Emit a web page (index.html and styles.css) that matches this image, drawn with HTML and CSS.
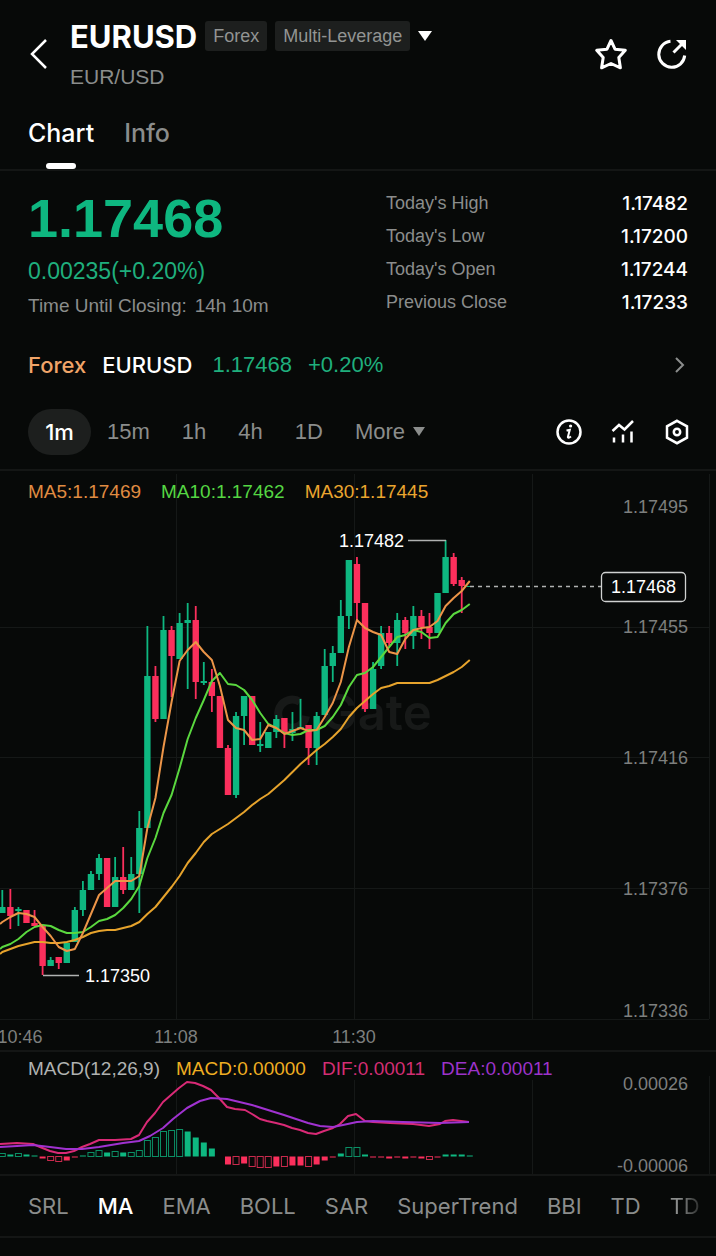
FILE: index.html
```html
<!DOCTYPE html>
<html lang="en">
<head>
  <meta charset="utf-8">
  <meta name="viewport" content="width=device-width, initial-scale=1">
  <title>EURUSD Chart</title>
  <link rel="stylesheet" href="styles.css">
</head>
<body>

<header class="top-bar">
  <button class="icon-btn back-btn" aria-label="Back">
    <svg width="20" height="32" viewBox="0 0 20 32"><path d="M18 2 L4 16 L18 30"/></svg>
  </button>
  <div class="pair">
    <div class="pair-row">
      <h1>EURUSD</h1>
      <span class="tag">Forex</span>
      <span class="tag">Multi-Leverage</span>
      <button class="icon-btn" aria-label="Switch pair">
        <svg class="solid" width="14" height="12" viewBox="0 0 14 12"><path d="M0 1 H14 L7 11 Z"/></svg>
      </button>
    </div>
    <div class="pair-name">EUR/USD</div>
  </div>
  <div class="top-actions">
    <button class="icon-btn" aria-label="Favorite">
      <svg class="bold" width="34" height="34" viewBox="0 0 34 34"><path d="M17 3.500 L21 12.200 L31.300 13.300 L24.800 20.500 L26.400 30.800 L17 26.500 L7.600 30.800 L9.200 20.500 L2.700 13.300 L13 12.200 Z"/></svg>
    </button>
    <button class="icon-btn" aria-label="Share">
      <svg class="bold" width="32" height="32" viewBox="0 0 32 32"><path d="M14.500 3.300 A13 13 0 1 0 28.700 17.500 M17.500 14.500 L26 6"/><path class="dot" d="M20 2 H30 V12 Z"/></svg>
    </button>
  </div>
</header>

<nav class="tabs">
  <a href="#chart" class="tab active">Chart</a>
  <a href="#info" class="tab">Info</a>
</nav>

<section class="quote">
  <div class="quote-main">
    <div class="price">1.17468</div>
    <div class="change">0.00235(+0.20%)</div>
    <div class="closing"><span>Time Until Closing:</span> <span>14h 10m</span></div>
  </div>
  <dl class="stats">
    <div><dt>Today's High</dt><dd>1.17482</dd></div>
    <div><dt>Today's Low</dt><dd>1.17200</dd></div>
    <div><dt>Today's Open</dt><dd>1.17244</dd></div>
    <div><dt>Previous Close</dt><dd>1.17233</dd></div>
  </dl>
</section>

<a href="#forex" class="ticker">
  <span class="ticker-type">Forex</span>
  <span class="ticker-name">EURUSD</span>
  <span class="ticker-price">1.17468</span>
  <span class="ticker-price">+0.20%</span>
  <svg class="ticker-arrow" width="14" height="18" viewBox="0 0 14 18"><path d="M2 2 L9 9 L2 16"/></svg>
</a>

<div class="toolbar">
  <div class="periods">
    <button class="period active">1m</button>
    <button class="period">15m</button>
    <button class="period">1h</button>
    <button class="period">4h</button>
    <button class="period">1D</button>
    <button class="period">More <svg class="solid" width="12" height="10" viewBox="0 0 12 10"><path d="M0 0 H12 L6 9 Z"/></svg></button>
  </div>
  <div class="tools">
    <button class="icon-btn" aria-label="Information">
      <svg width="28" height="28" viewBox="0 0 28 28"><circle cx="14" cy="14" r="11.500"/><path class="thin" d="M11.500 12.500 L14.800 11.800 L12.900 19 Q12.800 20.800 16 18.500"/><circle class="dot" cx="15.600" cy="8" r="1.600"/></svg>
    </button>
    <button class="icon-btn" aria-label="Indicators">
      <svg width="28" height="28" viewBox="0 0 28 28"><path d="M3.500 13 L10 7 L15.500 11.500 L24 3 M5 19.500 V24.500 M14 16.500 V24.500 M22.500 13.500 V24.500"/></svg>
    </button>
    <button class="icon-btn" aria-label="Settings">
      <svg width="28" height="28" viewBox="0 0 28 28"><path d="M14 2.800 L24 8.300 V19.700 L14 25.200 L4 19.700 V8.300 Z"/><circle cx="14" cy="14" r="3.200"/></svg>
    </button>
  </div>
</div>

<main id="chart">
  <section class="pane">
    <div class="legend">
      <span class="ma5">MA5:1.17469</span>
      <span class="ma10">MA10:1.17462</span>
      <span class="ma30">MA30:1.17445</span>
    </div>
    <svg class="plot" viewBox="0 471 716 579">
      <path class="grid" d="M0 627.500 H709 M0 757.500 H709 M0 888.500 H709 M0 1019.500 H709 M176.500 474 V1019 M354.500 474 V1019 M532.500 474 V1019 M709.500 474 V1019"/>
      <g class="watermark">
        <path d="M300 702 A14 14 0 1 0 306 716"/>
        <text x="321" y="730">Gate</text>
      </g>
      <g id="candles"></g>
      <polyline id="ma30" class="line line-ma30"/>
      <polyline id="ma10" class="line line-ma10"/>
      <polyline id="ma5" class="line line-ma5"/>
      <path class="marker" d="M408 540.500 H446 M43 975.500 H79"/>
      <path class="last-line" d="M470 586.500 H601"/>
      <rect class="last-box" x="601.500" y="572.500" width="84" height="29" rx="4"/>
      <g class="note">
        <text x="339" y="547">1.17482</text>
        <text x="85" y="982">1.17350</text>
        <text x="611" y="593">1.17468</text>
      </g>
      <g class="axis">
        <text x="688" y="513">1.17495</text>
        <text x="688" y="633">1.17455</text>
        <text x="688" y="764">1.17416</text>
        <text x="688" y="895">1.17376</text>
        <text x="688" y="1017">1.17336</text>
      </g>
      <g class="axis time">
        <text x="20" y="1043">10:46</text>
        <text x="176" y="1043">11:08</text>
        <text x="354" y="1043">11:30</text>
      </g>
    </svg>
  </section>

  <section class="pane macd-pane">
    <div class="legend">
      <span class="macd-name">MACD(12,26,9)</span>
      <span class="macd">MACD:0.00000</span>
      <span class="dif">DIF:0.00011</span>
      <span class="dea">DEA:0.00011</span>
    </div>
    <svg class="plot" viewBox="0 1052 716 122">
      <path class="grid" d="M176.500 1080 V1174 M354.500 1080 V1174 M532.500 1080 V1174 M709.500 1076 V1174"/>
      <g id="bars"></g>
      <polyline id="dif" class="line line-dif"/>
      <polyline id="dea" class="line line-dea"/>
      <g class="axis">
        <text x="688" y="1090">0.00026</text>
        <text x="688" y="1172">-0.00006</text>
      </g>
    </svg>
  </section>
</main>

<nav class="indicators">
  <button>SRL</button>
  <button class="active">MA</button>
  <button>EMA</button>
  <button>BOLL</button>
  <button>SAR</button>
  <button>SuperTrend</button>
  <button>BBI</button>
  <button>TD</button>
  <button class="fade">TD</button>
</nav>

<script src="chart.js"></script>
</body>
</html>
```
FILE: styles.css
```css
* {
  box-sizing: border-box;
}
body {
  margin: 0;
  background: #070908;
  color: #fff;
  font-family: "Liberation Sans", Arial, sans-serif;
  overflow-x: hidden;
}
h1, .tabs, .stats dd, .ticker-type, .ticker-name, .period.active, .indicators {
  font-family: Inter, "Liberation Sans", sans-serif;
}
button {
  border: 0;
  padding: 0;
  background: none;
  color: inherit;
  font: inherit;
}
a {
  color: inherit;
  text-decoration: none;
}
svg {
  display: block;
  fill: none;
  stroke: #fff;
  stroke-width: 2.5;
}
.bold {
  stroke-width: 3;
  stroke-linejoin: round;
}
.thin {
  stroke-width: 2;
}
.solid {
  fill: currentColor;
  stroke: none;
}
.dot {
  fill: #fff;
  stroke: none;
}

/* header */
.top-bar {
  display: flex;
  align-items: center;
  padding: 12px 28px 0;
  height: 96px;
}
.back-btn {
  width: 42px;
}
.pair {
  flex: 1;
}
.pair-row {
  display: flex;
  align-items: center;
  gap: 8px;
  height: 46px;
}
h1 {
  margin: 0;
  font-size: 31px;
  font-weight: 700;
}
.tag {
  padding: 0 8px;
  border-radius: 3px;
  background: #1d1f1e;
  color: #929493;
  font-size: 18px;
  line-height: 30px;
}
.pair-name {
  color: #8b8d8c;
  font-size: 21px;
  line-height: 36px;
}
.top-actions {
  display: flex;
  align-items: center;
  gap: 28px;
}

.tabs {
  display: flex;
  gap: 30px;
  height: 75px;
  padding: 0 28px;
  border-bottom: 2px solid #141615;
  color: #8b8d8c;
  font-size: 25px;
  font-weight: 500;
  line-height: 74px;
}
.tab.active {
  position: relative;
  color: #fff;
}
.tab.active::after {
  content: "";
  position: absolute;
  left: 18px;
  bottom: 0;
  width: 30px;
  height: 6px;
  border-radius: 3px;
  background: #fff;
}

/* quote */
.quote {
  display: flex;
  justify-content: space-between;
  padding: 16px 28px 0;
  height: 160px;
}
.price {
  color: #0eb780;
  font-size: 54px;
  font-weight: 700;
  line-height: 62px;
}
.change {
  color: #1faf7d;
  font-size: 23px;
  line-height: 44px;
}
.closing {
  display: flex;
  gap: 8px;
  color: #8b8d8c;
  font-size: 19px;
  line-height: 26px;
}
.stats {
  width: 302px;
  margin: 0;
  color: #8b8d8c;
  font-size: 18px;
  line-height: 33px;
}
.stats div {
  display: flex;
  justify-content: space-between;
}
.stats dd {
  margin: 0;
  color: #fff;
  font-size: 19px;
  font-weight: 500;
}

.ticker {
  display: flex;
  align-items: center;
  gap: 16px;
  height: 68px;
  padding: 0 28px;
  font-size: 22px;
}
.ticker-type {
  color: #f0a468;
  font-weight: 500;
}
.ticker-name {
  margin-right: 4px;
  font-weight: 500;
}
.ticker-price {
  color: #1faf7d;
}
.ticker-arrow {
  margin-left: auto;
  stroke: #8b8d8c;
  stroke-width: 2;
}

.toolbar {
  display: flex;
  align-items: center;
  justify-content: space-between;
  height: 72px;
  padding: 0 25px 4px 28px;
  border-bottom: 2px solid #141615;
}
.periods {
  display: flex;
  color: #8b8d8c;
  font-size: 22px;
}
.period {
  display: flex;
  align-items: center;
  justify-content: center;
  gap: 8px;
  height: 46px;
  padding: 0 16px;
}
.period.active {
  min-width: 63px;
  border-radius: 23px;
  background: #1d1f1e;
  color: #fff;
  font-weight: 500;
}
.tools {
  display: flex;
  gap: 26px;
}

/* chart */
.pane {
  position: relative;
  border-bottom: 2px solid #141615;
}
.legend {
  position: absolute;
  top: 8px;
  left: 28px;
  display: flex;
  gap: 20px;
  font-size: 19px;
  line-height: 26px;
}
.macd-pane .legend {
  top: 4px;
  gap: 16px;
}
.plot {
  width: 100%;
  height: auto;
  overflow: visible;
}
.ma5 { color: #e08c42; }
.ma10 { color: #55d643; }
.ma30 { color: #eba52f; }
.macd-name { color: #b0b2b1; }
.macd { color: #efae22; }
.dif { color: #d22e74; }
.dea { color: #9c33c9; }

.grid {
  stroke: #151817;
  stroke-width: 1;
}
.watermark path {
  stroke: #171918;
  stroke-width: 8;
}
.watermark text {
  fill: #171918;
  stroke: none;
  font-family: Inter, sans-serif;
  font-size: 49px;
  font-weight: 600;
}
.up {
  fill: #0eb780;
  stroke: none;
}
.down {
  fill: #fb2f5c;
  stroke: none;
}
.up-hollow {
  stroke: #0b8f65;
  stroke-width: 1;
}
.down-hollow {
  stroke: #c92a4d;
  stroke-width: 1;
}
.line {
  stroke-width: 2;
  stroke-linejoin: round;
}
.line-ma5 { stroke: #ec9548; }
.line-ma10 { stroke: #5ad83f; }
.line-ma30 { stroke: #e6a32c; }
.line-dif { stroke: #d92a76; }
.line-dea { stroke: #a032d0; }
.marker {
  stroke: #b0b2b1;
  stroke-width: 1.5;
}
.last-line {
  stroke: #b0b2b1;
  stroke-width: 1.5;
  stroke-dasharray: 4 4;
}
.last-box {
  fill: #070908;
  stroke: #d0d2d1;
  stroke-width: 1.3;
}
.plot text {
  stroke: none;
}
.note {
  fill: #fff;
  font-size: 18px;
}
.axis {
  fill: #7d7f7e;
  font-size: 18px;
  text-anchor: end;
}
.time {
  text-anchor: middle;
}

.indicators {
  display: flex;
  gap: 29px;
  height: 62px;
  padding: 0 28px;
  border-bottom: 2px solid #141615;
  color: #8b8d8c;
  font-size: 22px;
  white-space: nowrap;
  overflow: hidden;
}
.indicators .active {
  color: #fff;
  font-weight: 500;
}
.fade {
  background: linear-gradient(to right, #8b8d8c 30%, #2a2c2b);
  background-clip: text;
  -webkit-background-clip: text;
  color: transparent;
}
```
FILE: chart.js
```js
const STEP = 8.06;
const START = 2.3;
const svgNS = "http://www.w3.org/2000/svg";

// high, body top, body bottom, low, up(1) / down(0)
const candles = [
  [890,907,913,913,1],[889,907,916,929,0],[907,909,911,926,1],[910,910,923,923,0],[910,923,926,926,0],
  [926,926,966,975,0],[957,960,966,966,1],[957,957,963,969,0],[943,943,963,963,1],[907,910,942,942,1],
  [881,890,910,916,1],[871,874,890,890,1],[854,858,874,880,1],[858,858,907,907,0],[857,877,907,907,1],
  [847,877,890,894,0],[857,874,890,890,1],[811,828,874,913,1],[626,676,828,828,1],[666,676,719,722,0],
  [616,630,719,719,1],[626,630,656,697,0],[613,623,659,659,1],[603,620,623,689,1],[606,620,682,699,0],
  [662,681,683,685,1],[669,682,696,712,0],[696,696,748,748,0],[745,748,795,795,0],[712,716,795,798,1],
  [696,696,716,745,1],[696,696,745,745,0],[722,744,746,752,1],[732,732,748,748,1],[715,719,732,738,1],
  [718,718,733,748,0],[712,729,733,741,1],[699,727,729,729,1],[725,725,748,765,0],[712,716,748,765,1],
  [649,666,715,715,1],[646,653,666,682,1],[600,616,653,653,1],[560,560,616,629,1],[557,564,603,620,0],
  [603,603,709,712,0],[662,669,709,709,1],[626,633,666,669,1],[626,633,643,646,0],[613,620,643,666,1],
  [617,620,633,649,0],[606,616,636,649,1],[610,616,627,639,0],[613,627,633,649,0],[593,593,633,633,1],
  [540,557,593,593,1],[553,557,584,586,0],[577,580,586,613,0],[586,586,587,587,1]
];
const ma5 = [922,917,913,914,917,927,936,947,951,949,933,914,895,888,881,881,881,876,828,798,747,702,661,650,642,652,660,686,720,728,730,740,739,725,728,734,731,728,731,730,717,703,682,647,620,628,632,635,652,654,639,630,628,627,621,606,598,591,581];
const ma10 = [947,944,939,932,927,925,926,930,933,933,932,927,921,919,915,908,899,886,858,838,813,795,768,739,718,700,681,673,684,685,690,700,713,724,728,733,735,734,730,730,726,717,705,687,675,673,667,657,647,637,635,630,632,638,637,623,614,610,604];
const ma30 = [952,949,946,944,942,942,943,943,942,940,937,933,931,930,930,928,926,922,914,907,897,887,876,863,853,842,834,829,824,818,812,805,799,794,787,780,772,764,757,750,744,737,729,717,708,701,694,688,686,683,683,683,683,683,680,676,672,667,660];

// height (positive is up), solid(1) / hollow(0)
const bars = [
  [3,0],[2,1],[3,0],[2,1],[1,1],[-2,1],[-4,0],[-5,0],[-4,1],[-1,1],
  [1,1],[4,0],[6,0],[4,1],[5,0],[4,1],[4,0],[6,0],[16,0],[19,0],
  [25,0],[26,0],[27,0],[25,1],[19,1],[14,1],[8,1],[0,1],[-8,1],[-8,0],
  [-7,1],[-10,0],[-11,0],[-11,0],[-10,1],[-10,0],[-9,1],[-9,1],[-10,0],[-8,1],
  [-4,1],[-1,1],[3,1],[9,0],[9,0],[2,1],[-1,1],[-1,1],[-2,1],[-1,1],
  [-2,1],[-1,1],[-2,1],[-3,0],[-1,1],[2,1],[2,1],[2,1],[1,1]
];
const dif = [[0,1144],[17,1143],[33,1144],[40,1147],[50,1151],[58,1153],[66,1153],[74,1151],[82,1147],[90,1144],[99,1140],[115,1140],[131,1139],[139,1135],[147,1122],[155,1113],[163,1102],[171,1095],[179,1088],[187,1082],[195,1083],[203,1086],[211,1090],[219,1098],[227,1107],[235,1109],[245,1110],[252,1114],[260,1119],[267,1121],[276,1123],[284,1125],[292,1128],[300,1130],[308,1133],[316,1134],[324,1131],[333,1128],[340,1124],[348,1116],[356,1114],[365,1121],[373,1122],[390,1123],[413,1124],[429,1126],[440,1124],[445,1121],[453,1120],[469,1122]];
const dea = [[0,1147],[17,1146],[33,1145],[50,1147],[66,1149],[82,1149],[99,1147],[123,1143],[139,1141],[150,1136],[163,1128],[173,1119],[187,1108],[200,1101],[211,1098],[227,1099],[252,1105],[284,1115],[308,1123],[320,1126],[333,1127],[343,1125],[357,1122],[373,1121],[403,1122],[440,1123],[469,1122]];

function addRect(parent, cls, x, y, w, h) {
  const rect = document.createElementNS(svgNS, "rect");
  rect.setAttribute("class", cls);
  rect.setAttribute("x", x);
  rect.setAttribute("y", y);
  rect.setAttribute("width", w);
  rect.setAttribute("height", h);
  parent.appendChild(rect);
}

const candleGroup = document.getElementById("candles");
candles.forEach(([high, top, bottom, low, up], i) => {
  const x = START + i * STEP;
  const cls = up ? "up" : "down";
  addRect(candleGroup, cls, x - 0.9, high, 1.8, low - high);
  addRect(candleGroup, cls, x - 3.2, top, 6.4, bottom - top);
});

const barGroup = document.getElementById("bars");
bars.forEach(([height, solid], i) => {
  const x = START + i * STEP;
  const cls = (height > 0 ? "up" : "down") + (solid ? "" : "-hollow");
  const y = height > 0 ? 1156.5 - height : 1156.5;
  addRect(barGroup, cls, x - 3, y, 6, Math.abs(height));
});

// averages run on to the left edge
function drawSeries(id, values) {
  const points = values.map((y, i) => (START + i * STEP) + "," + y);
  points.unshift("0," + (values[0] + 2));
  document.getElementById(id).setAttribute("points", points.join(" "));
}
drawSeries("ma5", ma5);
drawSeries("ma10", ma10);
drawSeries("ma30", ma30);
document.getElementById("dif").setAttribute("points", dif.join(" "));
document.getElementById("dea").setAttribute("points", dea.join(" "));
```
